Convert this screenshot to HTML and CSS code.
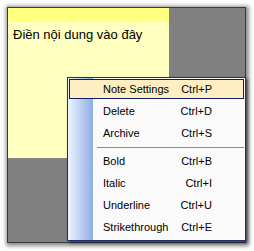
FILE: index.html
```html
<!DOCTYPE html>
<html lang="vi">
<head>
    <meta charset="UTF-8">
    <meta name="viewport" content="width=device-width, initial-scale=1.0">
    <title>Note</title>
    <link rel="stylesheet" href="styles.css">
</head>
<body>
    <div class="window">
        <!-- Note -->
        <div class="note">
            <div class="note-bar"></div>
            <p class="note-text">Điền nội dung vào đây</p>
        </div>

        <!-- Context menu -->
        <div class="menu">
            <div class="item active"><span>Note Settings</span><span class="key">Ctrl+P</span></div>
            <div class="item"><span>Delete</span><span class="key">Ctrl+D</span></div>
            <div class="item"><span>Archive</span><span class="key">Ctrl+S</span></div>
            <div class="sep"></div>
            <div class="item"><span>Bold</span><span class="key">Ctrl+B</span></div>
            <div class="item"><span>Italic</span><span class="key">Ctrl+I</span></div>
            <div class="item"><span>Underline</span><span class="key">Ctrl+U</span></div>
            <div class="item"><span>Strikethrough</span><span class="key">Ctrl+E</span></div>
        </div>
    </div>
</body>
</html>
```

FILE: styles.css
```css
body {
    margin: 0;
    background: #fff;
    font-family: "Liberation Sans", Arial, sans-serif;
}
.window {
    position: relative;
    margin: 8px;
    width: 237px;
    height: 234px;
    background: #808080;
    box-shadow: 0 0 0 1px #3a3a3a, 1px 1px 4px 3px rgba(0, 0, 0, 0.45);
}
.note {
    width: 161px;
    height: 150px;
    background: #ffffc0;
}
.note-bar {
    height: 14px;
    background: #ffff80;
}
.note-text {
    margin: 0;
    padding: 5px 5px 0;
    font-size: 13px;
    line-height: 16px;
    color: #000;
}
.menu {
    position: absolute;
    left: 59px;
    top: 69px;
    width: 177px;
    display: flex;
    flex-direction: column;
    padding-bottom: 2px;
    border: 1px solid #1c2f6e;
    background: linear-gradient(to right, #eef4fd 0, #8eaee3 25px, #fafafa 25px);
    box-shadow: 2px 2px 3px rgba(0, 0, 0, 0.5);
    font-size: 11px;
    color: #000;
}
.item {
    display: flex;
    justify-content: space-between;
    align-items: center;
    height: 20px;
    margin: 1px;
    padding: 0 31px 0 33px;
    border: 1px solid transparent;
    box-sizing: border-box;
}
.item.active {
    background: #ffeec2;
    border-color: #0a1f6a;
}
.sep {
    height: 1px;
    margin: 3px 1px 2px 29px;
    background: #7a8aa8;
}
```
